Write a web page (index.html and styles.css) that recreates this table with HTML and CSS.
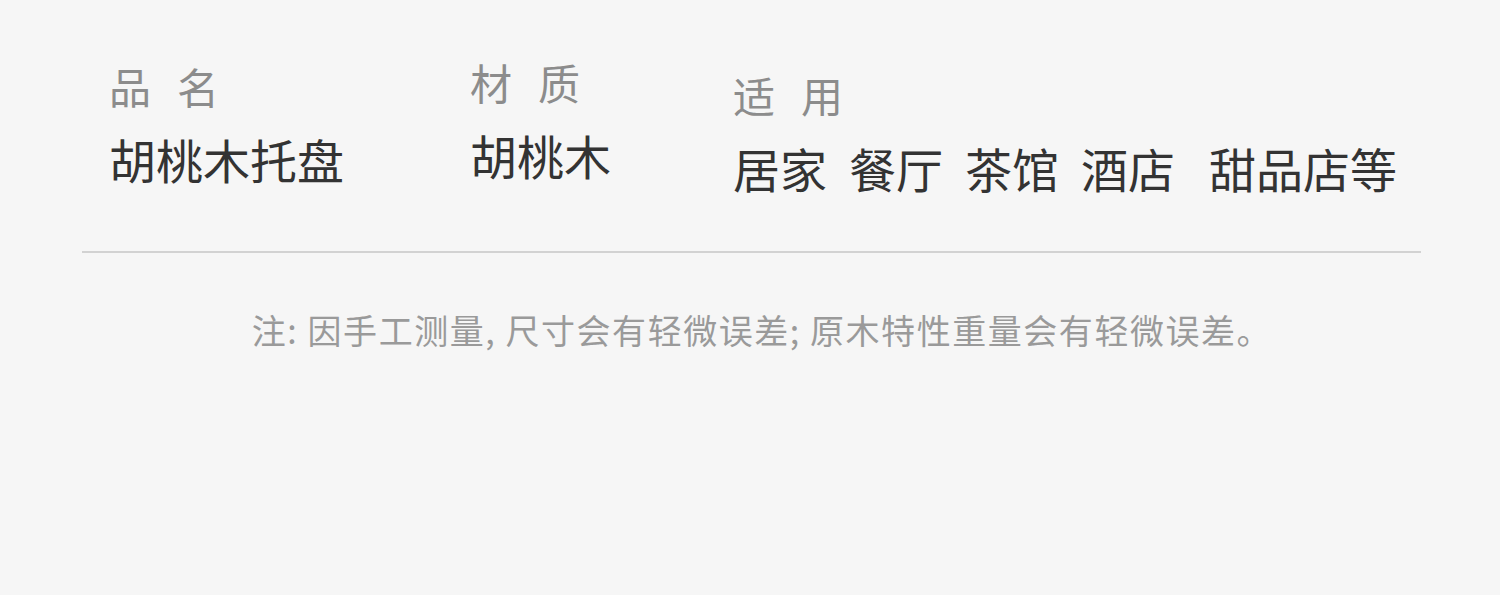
FILE: index.html
```html
<!DOCTYPE html>
<html lang="zh-CN">
<head>
  <meta charset="UTF-8">
  <meta name="viewport" content="width=device-width, initial-scale=1.0">
  <title>胡桃木托盘</title>
  <link rel="stylesheet" href="styles.css">
</head>
<body>
  <div class="sheet">
    <div class="spec-row">
      <div class="spec spec-name">
        <p class="spec-label">品名</p>
        <p class="spec-value">胡桃木托盘</p>
      </div>
      <div class="spec spec-material">
        <p class="spec-label">材质</p>
        <p class="spec-value">胡桃木</p>
      </div>
      <div class="spec spec-use">
        <p class="spec-label">适用</p>
        <p class="spec-value uses">
          <span>居家</span>
          <span>餐厅</span>
          <span>茶馆</span>
          <span>酒店</span>
          <span class="last">甜品店等</span>
        </p>
      </div>
    </div>

    <div class="divider"></div>

    <p class="note">注: 因手工测量, 尺寸会有轻微误差; 原木特性重量会有轻微误差。</p>
  </div>
</body>
</html>
```

FILE: styles.css
```css
html, body {
  height: 605px;
}

body {
  margin: 0;
  padding: 0;
  background-color: #fff;
  font-family: "Noto Sans CJK SC", "Noto Sans", sans-serif;
}

.sheet {
  background-color: #f6f6f6;
  height: 595px;
  overflow: hidden;
}

.spec-row {
  display: flex;
  align-items: flex-start;
  padding-left: 109px;
}

.spec p {
  margin: 0;
  line-height: 1;
}

.spec-name {
  width: 361px;
  margin-top: 65px;
}

.spec-material {
  width: 263px;
  margin-top: 61px;
}

.spec-use {
  margin-top: 74px;
}

.spec-label {
  font-size: 42px;
  color: #8c8c8c;
  letter-spacing: 26px;
}

.spec-value {
  margin-top: 28px !important;
  font-size: 47px;
  color: #333;
}

.uses {
  display: flex;
  gap: 22px;
}

.uses .last {
  margin-left: 12px;
}

.divider {
  height: 2px;
  background-color: #d2d2d2;
  margin: 60px 79px 0 82px;
}

.note {
  margin: 60px 0 0;
  padding-left: 24px;
  text-align: center;
  font-size: 34px;
  line-height: 1;
  letter-spacing: 1.55px;
  color: #9a9a9a;
}
```
